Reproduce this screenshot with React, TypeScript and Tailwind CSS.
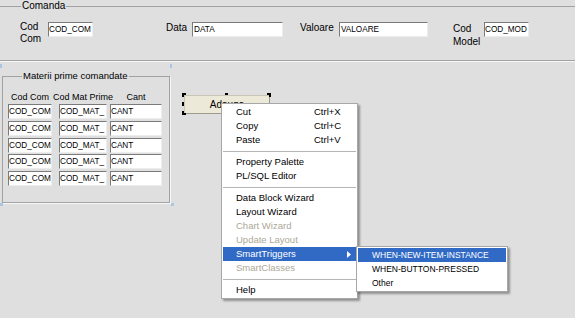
import React from 'react';

const font = { fontFamily: '"Liberation Sans", Arial, sans-serif' };

// Sunken text item as drawn in the Forms layout editor
const Field = ({ value, className }: { value: string; className?: string }) => (
  <div
    className={`h-[15px] bg-white border border-t-[#7a7a7a] border-l-[#7a7a7a] border-r-[#ededed] border-b-[#ededed] overflow-hidden whitespace-nowrap text-[8.2px] leading-[13px] ${className ?? ''}`}
  >
    {value}
  </div>
);

type Item = { label?: string; shortcut?: string; disabled?: boolean; active?: boolean; sub?: boolean; sep?: boolean };

const menuItems: Item[] = [
  { label: 'Cut', shortcut: 'Ctrl+X' },
  { label: 'Copy', shortcut: 'Ctrl+C' },
  { label: 'Paste', shortcut: 'Ctrl+V' },
  { sep: true },
  { label: 'Property Palette' },
  { label: 'PL/SQL Editor' },
  { sep: true },
  { label: 'Data Block Wizard' },
  { label: 'Layout Wizard' },
  { label: 'Chart Wizard', disabled: true },
  { label: 'Update Layout', disabled: true },
  { label: 'SmartTriggers', active: true, sub: true },
  { label: 'SmartClasses', disabled: true },
  { sep: true },
  { label: 'Help' },
];

const subItems = ['WHEN-NEW-ITEM-INSTANCE', 'WHEN-BUTTON-PRESSED', 'Other'];

const rows = [0, 1, 2, 3, 4];

export default function App() {
  return (
    <div className="relative w-[575px] h-[318px] overflow-hidden bg-[#dfdfdf] text-black" style={font}>
      <div className="flex flex-col">
        {/* Comanda block */}
        <fieldset className="h-[61px] -ml-[2px] border-t border-b border-[#a2a2a2] shadow-[0_1px_0_#f7f7f7]">
          <legend className="ml-[23px] px-[1px] text-[10px] leading-[12px]">Comanda</legend>
          <div className="flex items-start pt-[9px] pl-[22px] text-[10px] leading-[12px]">
            <div className="w-[28px]">
              Cod
              <br />
              Com
            </div>
            <Field value="COD_COM" className="w-[45px] mt-[1px]" />
            <div className="ml-[73px] w-[26px] pt-[1px]">Data</div>
            <Field value="DATA" className="w-[91px] mt-[1px] pl-[1px]" />
            <div className="ml-[17px] w-[39px] pt-[1px]">Valoare</div>
            <Field value="VALOARE" className="w-[89px] mt-[1px] pl-[1px]" />
            <div className="ml-[25px] w-[31px] pt-[1px] leading-[13px]">
              Cod
              <br />
              Model
            </div>
            <Field value="COD_MOD" className="w-[45px] mt-[1px]" />
          </div>
        </fieldset>

        {/* Materii prime comandate block */}
        <fieldset className="mt-[9px] ml-[2px] w-[168px] h-[133px] border border-[#a2a2a2] shadow-[1px_1px_0_#f7f7f7]">
          <legend className="ml-[19px] px-[1px] text-[9.5px] leading-[12px]">Materii prime comandate</legend>
          <div className="pt-[9px] pl-[5px] text-[9px] leading-[12px]">
            <div className="flex">
              <div className="w-[44px] text-center whitespace-nowrap">Cod Com</div>
              <div className="ml-[7px] w-[48px] flex justify-center whitespace-nowrap">Cod Mat Prime</div>
              <div className="ml-[3px] w-[52px] text-center">Cant</div>
            </div>
            <div className="mt-[1px] flex flex-col gap-[1.75px]">
              {rows.map((r) => (
                <div key={r} className="flex">
                  <Field value="COD_COM" className="w-[44px]" />
                  <Field value="COD_MAT_" className="w-[48px] ml-[7px]" />
                  <Field value="CANT" className="w-[52px] ml-[3px]" />
                </div>
              ))}
            </div>
          </div>
        </fieldset>
      </div>

      {/* frame selection ticks */}
      <div className="absolute left-0 top-[64px] w-[2px] h-[4px] bg-[#a9c6e3]" />
      <div className="absolute left-[170px] top-[64px] w-[2px] h-[4px] bg-[#a9c6e3]" />
      <div className="absolute left-0 top-[203px] w-[3px] h-[3px] bg-[#a9c6e3]" />
      <div className="absolute left-[171px] top-[203px] w-[3px] h-[3px] bg-[#a9c6e3]" />

      {/* selected button on the canvas */}
      <div className="absolute left-[184px] top-[95px] w-[86px] h-[19px] bg-[#ece9d8] border border-[#c9c6b8] border-b-[#9d9a8c] border-r-[#9d9a8c] flex items-center justify-center text-[10px]">
        Adauga
      </div>
      <div className="absolute left-[182px] top-[93px] w-[4px] h-[4px] border-l-2 border-t-2 border-black" />
      <div className="absolute left-[225px] top-[93px] w-[3px] h-[2px] bg-black" />
      <div className="absolute left-[267px] top-[93px] w-[4px] h-[4px] border-r-2 border-t-2 border-black" />
      <div className="absolute left-[182px] top-[102px] w-[2px] h-[4px] bg-black" />
      <div className="absolute left-[182px] top-[111px] w-[4px] h-[4px] border-l-2 border-b-2 border-black" />

      {/* context menu */}
      <div className="absolute left-[221px] top-[103px] w-[137px] bg-white border border-[#a7a7a7] py-[1px] shadow-[2px_2px_2px_rgba(0,0,0,0.35)] text-[9.5px]">
        {menuItems.map((it, i) =>
          it.sep ? (
            <div key={i} className="h-[8px] flex items-center px-[1px]">
              <div className="h-px w-full bg-[#b5b5b5]" />
            </div>
          ) : (
            <div
              key={i}
              className={`mx-[1px] h-[14px] flex items-center pl-[13px] pr-[3px] ${
                it.active ? 'bg-[#316ac5] text-white' : it.disabled ? 'text-[#aca899]' : 'text-black'
              }`}
            >
              <span className="flex-1">{it.label}</span>
              {it.shortcut && <span className="w-[39px]">{it.shortcut}</span>}
              {it.sub && (
                <svg width="4" height="7" viewBox="0 0 4 7" className="mr-[2px]">
                  <path d="M0 0 L4 3.5 L0 7 Z" fill="#fff" />
                </svg>
              )}
            </div>
          )
        )}
      </div>

      {/* SmartTriggers submenu */}
      <div className="absolute left-[356px] top-[246px] w-[152px] bg-white border border-[#a7a7a7] py-[1px] shadow-[2px_2px_2px_rgba(0,0,0,0.35)] text-[8.5px]">
        {subItems.map((s, i) => (
          <div
            key={s}
            className={`mx-[1px] h-[14px] flex items-center pl-[14px] ${i === 0 ? 'bg-[#316ac5] text-white' : 'text-black'}`}
          >
            {s}
          </div>
        ))}
      </div>
    </div>
  );
}
